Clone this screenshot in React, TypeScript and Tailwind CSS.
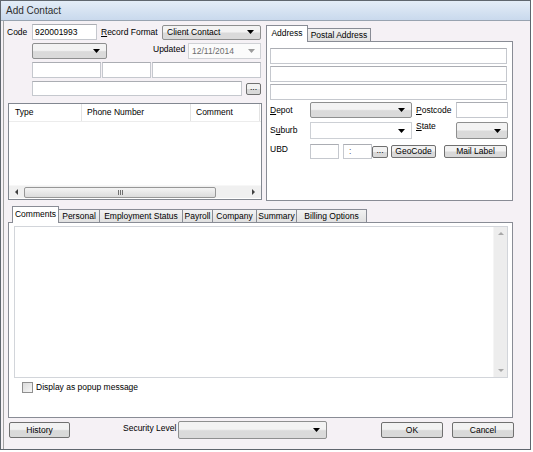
import React from 'react';

// small dropdown arrow used by the combo boxes
const Arrow = ({ gray }: { gray?: boolean }) => (
  <svg width="7" height="4" viewBox="0 0 7 4" className="shrink-0">
    <path d="M0 0h7L3.5 4z" fill={gray ? '#9c9c9c' : '#000'} />
  </svg>
);

const TextBox = ({ className = '', children }: { className?: string; children?: React.ReactNode }) => (
  <div className={`bg-white border border-[#c5c8ce] border-t-[#abadb3] flex items-center pl-[2px] shrink-0 ${className}`}>
    {children}
  </div>
);

const DropDown = ({ className = '', children }: { className?: string; children?: React.ReactNode }) => (
  <div
    className={`rounded-[2px] border border-[#8e8f8f] bg-gradient-to-b from-[#f3f3f3] from-45% to-[#dadada] to-55% flex items-center justify-between pl-[4px] pr-[6px] shrink-0 ${className}`}
  >
    <span>{children}</span>
    <Arrow />
  </div>
);

const Button = ({ className = '', children }: { className?: string; children?: React.ReactNode }) => (
  <div
    className={`rounded-[2px] border border-[#707070] bg-gradient-to-b from-[#f2f2f2] from-45% to-[#d9d9d9] to-55% flex items-center justify-center shrink-0 ${className}`}
  >
    {children}
  </div>
);

const Label = ({ className = '', children }: { className?: string; children?: React.ReactNode }) => (
  <div className={`shrink-0 whitespace-nowrap ${className}`}>{children}</div>
);

const TabActive = ({ className = '', children }: { className?: string; children?: React.ReactNode }) => (
  <div className={`h-[17px] bg-white border border-b-0 border-[#898c95] flex items-start pt-[3px] justify-center shrink-0 ${className}`}>
    {children}
  </div>
);

const Tab = ({ className = '', children }: { className?: string; children?: React.ReactNode }) => (
  <div
    className={`h-[14px] border border-l-0 border-[#898c95] bg-gradient-to-b from-[#f2f2f2] to-[#e1e1e1] flex items-center justify-center shrink-0 ${className}`}
  >
    {children}
  </div>
);

const Tri = ({ dir }: { dir: 'l' | 'r' | 'u' | 'd' }) => {
  const d = {
    l: 'M3 0v6L0 3z',
    r: 'M0 0v6l3-3z',
    u: 'M0 3h6L3 0z',
    d: 'M0 0h6L3 3z',
  }[dir];
  const vert = dir === 'u' || dir === 'd';
  return (
    <svg width={vert ? 6 : 3} height={vert ? 3 : 6} viewBox={vert ? '0 0 6 3' : '0 0 3 6'}>
      <path d={d} fill={vert ? '#a8a8a8' : '#404040'} />
    </svg>
  );
};

export default function App() {
  return (
    <div className="w-[533px] h-[452px] bg-white font-['Liberation_Sans',Arial,sans-serif] text-[8.5px] leading-none text-black">
      <div className="w-[531px] h-[450px] border border-[#5f666e] bg-[#f5f1f5] flex flex-col">
        {/* title bar */}
        <div className="h-[20px] shrink-0 bg-gradient-to-b from-[#e4edf7] to-[#c9d9ed] border-b border-[#98a3b0] flex items-center pl-[5px] text-[10px] text-[#2e2e2e]">
          Add Contact
        </div>

        <div className="flex-1 flex flex-col ml-[2px] border-l border-[#a3a3a3]">
          {/* top area */}
          <div className="h-[181px] flex shrink-0">
            {/* left column */}
            <div className="w-[259px] flex flex-col shrink-0">
              <div className="mt-[3px] h-[16px] flex items-center">
                <Label className="w-[28px] pl-[3px]">Code</Label>
                <TextBox className="w-[65px] h-[16px]">920001993</TextBox>
                <Label className="ml-[4px] w-[61px]">
                  <u>R</u>ecord Format
                </Label>
                <DropDown className="w-[99px] h-[15px]">Client Contact</DropDown>
              </div>

              <div className="mt-[3px] h-[16px] flex items-center">
                <DropDown className="ml-[28px] w-[75px] h-[16px]" />
                <Label className="ml-[46px] w-[35px] self-start pt-[2px]">Updated</Label>
                <div className="w-[73px] h-[16px] bg-[#fbfbfb] border border-[#cfd1d5] flex items-center justify-between pl-[3px] pr-[5px] text-[#6d6d6d]">
                  <span>12/11/2014</span>
                  <Arrow gray />
                </div>
              </div>

              <div className="mt-[3px] h-[16px] flex gap-[1px] ml-[28px]">
                <TextBox className="w-[69px] h-[16px]" />
                <TextBox className="w-[49px] h-[16px]" />
                <TextBox className="w-[109px] h-[16px]" />
              </div>

              <div className="mt-[3px] h-[15px] flex items-center ml-[28px]">
                <TextBox className="w-[210px] h-[15px]" />
                <Button className="ml-[4px] w-[15px] h-[12px] pb-[2px]">...</Button>
              </div>

              {/* phone list */}
              <div className="mt-[7px] ml-[4px] w-[254px] h-[97px] border border-[#828790] bg-white flex flex-col">
                <div className="h-[18px] flex border-b border-[#ececec] shrink-0">
                  <div className="w-[73px] border-r border-[#e3e3e3] flex items-center pl-[6px]">Type</div>
                  <div className="w-[109px] border-r border-[#e3e3e3] flex items-center pl-[5px]">Phone Number</div>
                  <div className="w-[69px] border-r border-[#e3e3e3] flex items-center pl-[5px]">Comment</div>
                </div>
                <div className="flex-1" />
                <div className="h-[13px] bg-[#f0f0f0] border-t border-[#f7f7f7] flex items-center shrink-0 mb-[1px]">
                  <div className="w-[15px] flex justify-center">
                    <Tri dir="l" />
                  </div>
                  <div className="w-[192px] h-[11px] rounded-[2px] border border-[#979797] bg-gradient-to-b from-[#f4f4f4] to-[#dcdcdc] flex items-center justify-center gap-[1px]">
                    <div className="w-px h-[5px] bg-[#707070]" />
                    <div className="w-px h-[5px] bg-[#707070]" />
                    <div className="w-px h-[5px] bg-[#707070]" />
                  </div>
                  <div className="flex-1" />
                  <div className="w-[15px] flex justify-center">
                    <Tri dir="r" />
                  </div>
                </div>
              </div>
            </div>

            {/* right column: address tabs */}
            <div className="ml-[3px] mt-[4px] w-[247px] flex flex-col shrink-0">
              <div className="flex items-end h-[17px] -mb-px relative z-10">
                <TabActive className="w-[42px]">Address</TabActive>
                <Tab className="w-[63px]">Postal Address</Tab>
              </div>
              <div className="h-[160px] border border-[#898c95] bg-white flex flex-col pl-[3px] pt-[6px]">
                <div className="flex flex-col gap-[2px]">
                  <TextBox className="w-[237px] h-[16px]" />
                  <TextBox className="w-[237px] h-[16px]" />
                  <TextBox className="w-[237px] h-[16px]" />
                </div>

                <div className="mt-[2px] h-[16px] flex items-center">
                  <Label className="w-[40px]">
                    <u>D</u>epot
                  </Label>
                  <DropDown className="w-[102px] h-[16px]" />
                  <Label className="ml-[4px] w-[40px]">
                    <u>P</u>ostcode
                  </Label>
                  <TextBox className="w-[52px] h-[16px]" />
                </div>

                <div className="mt-[4px] h-[17px] flex items-center">
                  <Label className="w-[40px]">
                    S<u>u</u>burb
                  </Label>
                  <div className="w-[102px] h-[17px] bg-white border border-[#cdd0d5] flex items-center justify-end pr-[6px]">
                    <Arrow />
                  </div>
                  <Label className="ml-[4px] w-[40px] self-start">
                    <u>S</u>tate
                  </Label>
                  <DropDown className="w-[52px] h-[17px]" />
                </div>

                <div className="mt-[5px] h-[15px] flex items-center">
                  <Label className="w-[40px] self-start pt-[1px]">UBD</Label>
                  <TextBox className="w-[29px] h-[15px]" />
                  <TextBox className="ml-[4px] w-[29px] h-[15px] pl-[5px] text-[#555]">:</TextBox>
                  <Button className="w-[16px] h-[12px] pb-[2px]">...</Button>
                  <Button className="ml-[3px] w-[45px] h-[13px]">GeoCode</Button>
                  <Button className="ml-[8px] w-[63px] h-[13px]">Mail Label</Button>
                </div>
              </div>
            </div>
          </div>

          {/* bottom tab group */}
          <div className="mt-[4px] ml-[4px] w-[505px] flex flex-col shrink-0">
            <div className="flex items-end h-[17px] pl-[4px] -mb-px relative z-10">
              <TabActive className="w-[47px]">Comments</TabActive>
              <Tab className="w-[41px]">Personal</Tab>
              <Tab className="w-[83px]">Employment Status</Tab>
              <Tab className="w-[30px]">Payroll</Tab>
              <Tab className="w-[44px]">Company</Tab>
              <Tab className="w-[40px]">Summary</Tab>
              <Tab className="w-[70px]">Billing Options</Tab>
            </div>
            <div className="h-[196px] border border-[#898c95] bg-white flex flex-col">
              <div className="ml-[5px] mt-[3px] w-[494px] h-[152px] border border-[#d2d5da] flex justify-end">
                <div className="w-[14px] h-full bg-[#ededed] border-l border-[#f5f5f5] flex flex-col items-center justify-between py-[5px]">
                  <Tri dir="u" />
                  <Tri dir="d" />
                </div>
              </div>
              <div className="mt-[4px] ml-[13px] flex items-center gap-[3px]">
                <div className="w-[11px] h-[11px] border border-[#8f8f8f] bg-gradient-to-br from-[#dcdcdc] to-[#f7f7f7]" />
                <span>Display as popup message</span>
              </div>
            </div>
          </div>

          {/* bottom buttons */}
          <div className="mt-[3px] h-[18px] flex items-center shrink-0">
            <Button className="ml-[5px] w-[61px] h-[16px]">History</Button>
            <Label className="ml-[53px] w-[55px] self-start pt-[3px]">Security Level</Label>
            <DropDown className="w-[149px] h-[18px]" />
            <Button className="ml-[54px] w-[62px] h-[16px]">OK</Button>
            <Button className="ml-[9px] w-[62px] h-[16px]">Cancel</Button>
          </div>
        </div>
      </div>
    </div>
  );
}
